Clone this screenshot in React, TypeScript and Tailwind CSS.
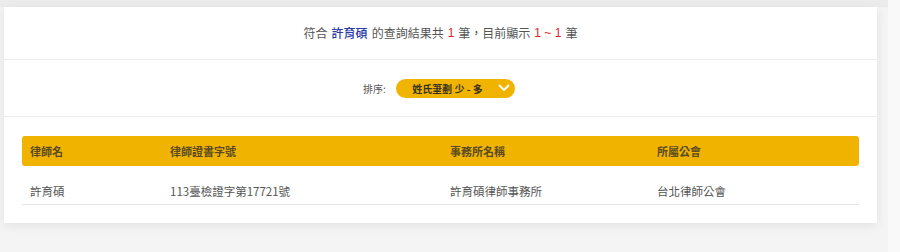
export default function App() {
  const rows = [
    { name: "許育碩", cert: "113臺檢證字第17721號", firm: "許育碩律師事務所", bar: "台北律師公會" },
  ];

  return (
    <div
      className="flex h-[252px] w-[900px] bg-[#f9f9f9]"
      style={{ fontFamily: '"Noto Sans CJK TC", "Noto Sans", sans-serif' }}
    >
      <div className="h-full w-[888px] bg-[#f4f4f4] pl-[4px] border-t-[7px] border-[#ececec]">
        <div className="w-[873px] bg-white shadow-[0_2px_10px_rgba(0,0,0,0.08)]">
          {/* result summary */}
          <div className="flex h-[53px] items-center justify-center border-b border-[#ebebeb] text-[12px] text-[#555]">
            <span>符合</span>
            <span className="mx-[4px] font-medium text-[#2a3aa8]">許育碩</span>
            <span>的查詢結果共</span>
            <span className="mx-[4px] text-[#e0262a]" style={{ fontFamily: '"Liberation Sans", sans-serif' }}>1</span>
            <span>筆，目前顯示</span>
            <span className="mx-[4px] text-[#e0262a]" style={{ fontFamily: '"Liberation Sans", sans-serif' }}>1 ~ 1</span>
            <span>筆</span>
          </div>

          {/* sort */}
          <div className="flex h-[57px] items-center justify-center border-b border-[#ebebeb] pr-[3px]">
            <span className="mr-[10px] text-[10px] text-[#555]">排序:</span>
            <button className="relative flex h-[19px] w-[119px] items-center justify-center rounded-full bg-[#f0b400] pr-[16px] text-[10px] font-bold text-[#3a3220]">
              姓氏筆劃 少 - 多
              <svg
                className="absolute right-[5px] top-[4px]"
                width="12"
                height="10"
                viewBox="0 0 12 10"
                fill="none"
                stroke="white"
                strokeWidth="1.8"
                strokeLinecap="round"
                strokeLinejoin="round"
              >
                <path d="M1.5 2.5 L6 7 L10.5 2.5" />
              </svg>
            </button>
          </div>

          {/* table */}
          <div className="px-[18px] pt-[19px] pb-[18px]">
            <div className="grid h-[30px] grid-cols-[140px_280px_207px_1fr] items-center rounded-[3px] bg-[#f0b400] text-[11px] font-bold text-[#5b4a22]">
              <div className="pl-[8px]">律師名</div>
              <div className="pl-[8px]">律師證書字號</div>
              <div className="pl-[8px]">事務所名稱</div>
              <div className="pl-[8px]">所屬公會</div>
            </div>
            {rows.map((r) => (
              <div
                key={r.cert}
                className="grid h-[39px] grid-cols-[140px_280px_207px_1fr] items-center border-b border-[#e6e6e6] pt-[13px] text-[11.5px] text-[#555]"
              >
                <div className="pl-[8px]">{r.name}</div>
                <div className="pl-[8px]">{r.cert}</div>
                <div className="pl-[8px]">{r.firm}</div>
                <div className="pl-[8px]">{r.bar}</div>
              </div>
            ))}
          </div>
        </div>
      </div>
    </div>
  );
}
